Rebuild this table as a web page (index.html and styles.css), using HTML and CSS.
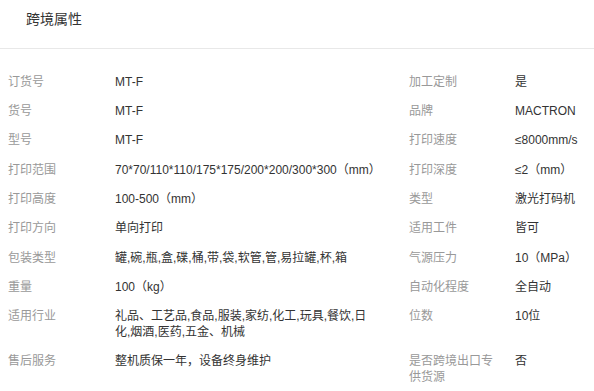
FILE: index.html
```html
<!DOCTYPE html>
<html lang="zh-CN">
<head>
<meta charset="utf-8">
<title>跨境属性</title>
<link rel="stylesheet" href="styles.css">
</head>
<body>
<div class="panel">
  <div class="panel-head">跨境属性</div>
  <div class="attrs">
    <div class="row"><div class="k">订货号</div><div class="v">MT-F</div><div class="k k2">加工定制</div><div class="v v2">是</div></div>
    <div class="row"><div class="k">货号</div><div class="v">MT-F</div><div class="k k2">品牌</div><div class="v v2">MACTRON</div></div>
    <div class="row"><div class="k">型号</div><div class="v">MT-F</div><div class="k k2">打印速度</div><div class="v v2">≤8000mm/s</div></div>
    <div class="row"><div class="k">打印范围</div><div class="v">70*70/110*110/175*175/200*200/300*300（mm）</div><div class="k k2">打印深度</div><div class="v v2">≤2（mm）</div></div>
    <div class="row"><div class="k">打印高度</div><div class="v">100-500（mm）</div><div class="k k2">类型</div><div class="v v2">激光打码机</div></div>
    <div class="row"><div class="k">打印方向</div><div class="v">单向打印</div><div class="k k2">适用工件</div><div class="v v2">皆可</div></div>
    <div class="row"><div class="k">包装类型</div><div class="v">罐,碗,瓶,盒,碟,桶,带,袋,软管,管,易拉罐,杯,箱</div><div class="k k2">气源压力</div><div class="v v2">10（MPa）</div></div>
    <div class="row"><div class="k">重量</div><div class="v">100（kg）</div><div class="k k2">自动化程度</div><div class="v v2">全自动</div></div>
    <div class="row"><div class="k">适用行业</div><div class="v">礼品、工艺品,食品,服装,家纺,化工,玩具,餐饮,日化,烟酒,医药,五金、机械</div><div class="k k2">位数</div><div class="v v2">10位</div></div>
    <div class="row"><div class="k">售后服务</div><div class="v">整机质保一年，设备终身维护</div><div class="k k2">是否跨境出口专供货源</div><div class="v v2">否</div></div>
  </div>
</div>
</body>
</html>
```

FILE: styles.css
```css
html, body {
  margin: 0;
  padding: 0;
  background: #ffffff;
}

body {
  font-family: "Liberation Sans", Arial, "Noto Sans CJK SC", sans-serif;
  color: #333333;
}

.panel {
  width: 594px;
}

.panel-head {
  box-sizing: border-box;
  height: 49px;
  padding: 9px 26px 0;
  font-size: 14px;
  line-height: 20px;
  color: #333333;
  border-bottom: 1px solid #e8e8e8;
}

.attrs {
  padding: 19px 0 0 8px;
}

.row {
  display: grid;
  grid-template-columns: 107px 294px 106px 1fr;
  font-size: 12px;
  line-height: 15.7px;
}

.k, .v {
  padding: 6.8px 0;
  word-break: break-all;
}

.k {
  color: #999999;
  padding-right: 12px;
}

.v {
  color: #333333;
  padding-right: 34px;
}

.v2 {
  padding-right: 0;
}
```
